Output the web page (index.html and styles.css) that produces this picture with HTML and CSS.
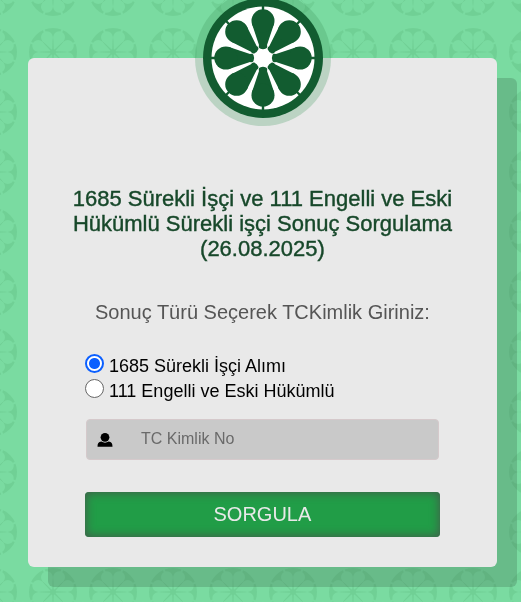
FILE: index.html
```html
<!DOCTYPE html>
<html lang="tr">
<head>
<meta charset="utf-8">
<meta name="viewport" content="width=device-width, initial-scale=1">
<title>Sonuç Sorgulama</title>
<link rel="stylesheet" href="styles.css">
</head>
<body>
<svg class="backdrop" aria-hidden="true">
  <defs>
    <g id="slice">
      <path d="M-0.400 -3 L-5.700 -14.500 H5.700 L0.400 -3Z M-1 -25 H1 V-20 H-1Z"/>
      <circle cy="-16" r="5.900"/>
    </g>
    <pattern id="tile" x="23" y="22" width="60" height="60" patternUnits="userSpaceOnUse">
      <g transform="translate(30 30)">
        <circle class="tile-disc" r="24"/>
        <g class="tile-slices" transform="rotate(22.5)">
          <use href="#slice"/>
          <use href="#slice" transform="rotate(45)"/>
          <use href="#slice" transform="rotate(90)"/>
          <use href="#slice" transform="rotate(135)"/>
          <use href="#slice" transform="rotate(180)"/>
          <use href="#slice" transform="rotate(225)"/>
          <use href="#slice" transform="rotate(270)"/>
          <use href="#slice" transform="rotate(315)"/>
        </g>
      </g>
    </pattern>
  </defs>
  <rect width="100%" height="100%" fill="url(#tile)"/>
</svg>

<main class="card">
  <svg class="logo" viewBox="-68 -68 136 136" role="img" aria-label="Logo">
    <defs>
      <g id="petal">
        <path d="M-3 -9.500 Q-4.800 -10.500 -4 -13 L-11 -34 H11 L4 -13 Q4.800 -10.500 3 -9.500 Q0 -8.200 -3 -9.500Z M-1.200 -53 H1.200 V-47 H-1.200Z"/>
        <circle cy="-37.200" r="11.500"/>
      </g>
    </defs>
    <circle class="logo-halo" r="68"/>
    <circle class="logo-green" r="60"/>
    <circle class="logo-white" r="51.500"/>
    <g class="logo-green">
      <use href="#petal"/>
      <use href="#petal" transform="rotate(45)"/>
      <use href="#petal" transform="rotate(90)"/>
      <use href="#petal" transform="rotate(135)"/>
      <use href="#petal" transform="rotate(180)"/>
      <use href="#petal" transform="rotate(225)"/>
      <use href="#petal" transform="rotate(270)"/>
      <use href="#petal" transform="rotate(315)"/>
    </g>
  </svg>

  <h1 class="title">1685 Sürekli İşçi ve 111 Engelli ve Eski Hükümlü Sürekli işçi Sonuç Sorgulama (26.08.2025)</h1>
  <form class="form">
    <p class="hint">Sonuç Türü Seçerek TCKimlik Giriniz:</p>
    <div class="choices">
      <label class="choice"><input class="radio" type="radio" name="tur" checked>1685 Sürekli İşçi Alımı</label>
      <label class="choice"><input class="radio" type="radio" name="tur">111 Engelli ve Eski Hükümlü</label>
    </div>
    <div class="field">
      <svg class="user" viewBox="0 0 16 16" aria-hidden="true">
        <circle cx="8" cy="5.300" r="4.400"/>
        <path d="M0.500 14.700 C0.500 11.500 1.500 10.200 4.300 9.600 Q8 11.800 11.700 9.600 C14.500 10.200 15.500 11.500 15.500 14.700Z"/>
      </svg>
      <input class="input" type="text" inputmode="numeric" aria-label="TC Kimlik No" placeholder="TC Kimlik No">
    </div>
    <button class="submit" type="submit">SORGULA</button>
  </form>
</main>
</body>
</html>
```

FILE: styles.css
```css
* {
  box-sizing: border-box;
}

body {
  margin: 0;
  padding: 58px 0 35px;
  background: #7adba1;
  font-family: "Liberation Sans", Arial, sans-serif;
}

.backdrop {
  position: fixed;
  inset: 0;
  z-index: -1;
  width: 100%;
  height: 100%;
}

.tile-disc {
  fill: #70d095;
}

.tile-slices {
  fill: #7adba1;
}

.card {
  position: relative;
  width: 90%;
  max-width: 600px;
  margin: 0 auto 0 28px;
  padding: 128px 40px 30px;
  background: #e9e9e9;
  border-radius: 6px;
  box-shadow: 20px 20px 0 rgba(50, 91, 68, 0.25);
}

.logo {
  position: absolute;
  top: -68px;
  left: calc(50% - 67px);
  width: 136px;
  height: 136px;
}

.logo-halo {
  fill: rgba(63, 150, 92, 0.27);
}

.logo-green {
  fill: #125c30;
}

.logo-white {
  fill: #fff;
}

.title {
  margin: 0;
  color: #17482a;
  font-size: 22px;
  font-weight: 400;
  line-height: 25px;
  text-align: center;
  -webkit-text-stroke: 0.4px #17482a;
}

.form {
  margin: 0 17px;
}

.hint {
  margin: 39px 0 30px;
  color: #555;
  font-size: 20px;
  line-height: 24px;
  text-align: center;
  white-space: nowrap;
}

.choices {
  margin-bottom: 15px;
}

.choice {
  display: flex;
  align-items: center;
  gap: 5px;
  height: 25px;
  color: #000;
  font-size: 18px;
}

.radio {
  appearance: none;
  width: 19px;
  height: 19px;
  margin: 0 0 6px;
  border: 1px solid #666;
  border-radius: 50%;
  background: #fff;
}

.radio:checked {
  border: 2px solid #0b5fff;
  background: radial-gradient(circle, #0b5fff 5px, #fff 6px);
}

.field {
  display: flex;
  align-items: center;
  height: 41px;
  margin: 0 1px 32px;
  padding-left: 10px;
  border: 1px solid #d5c9cb;
  border-radius: 4px;
  background: #c9c9c9;
}

.user {
  flex: none;
  width: 16px;
  height: 16px;
}

.input {
  flex: 1;
  min-width: 0;
  height: 100%;
  padding: 0 12px 2px 28px;
  border: 0;
  outline: 0;
  background: transparent;
  color: #333;
  font: 16px "Liberation Sans", Arial, sans-serif;
}

.input::placeholder {
  color: #6a6a6a;
}

.submit {
  display: block;
  width: 100%;
  height: 45px;
  padding: 0;
  border: 0;
  border-radius: 4px;
  background: #219d47;
  box-shadow: inset 0 0 10px 1px #445c4c;
  color: #e9e9e9;
  font: 20px "Liberation Sans", Arial, sans-serif;
}
```
